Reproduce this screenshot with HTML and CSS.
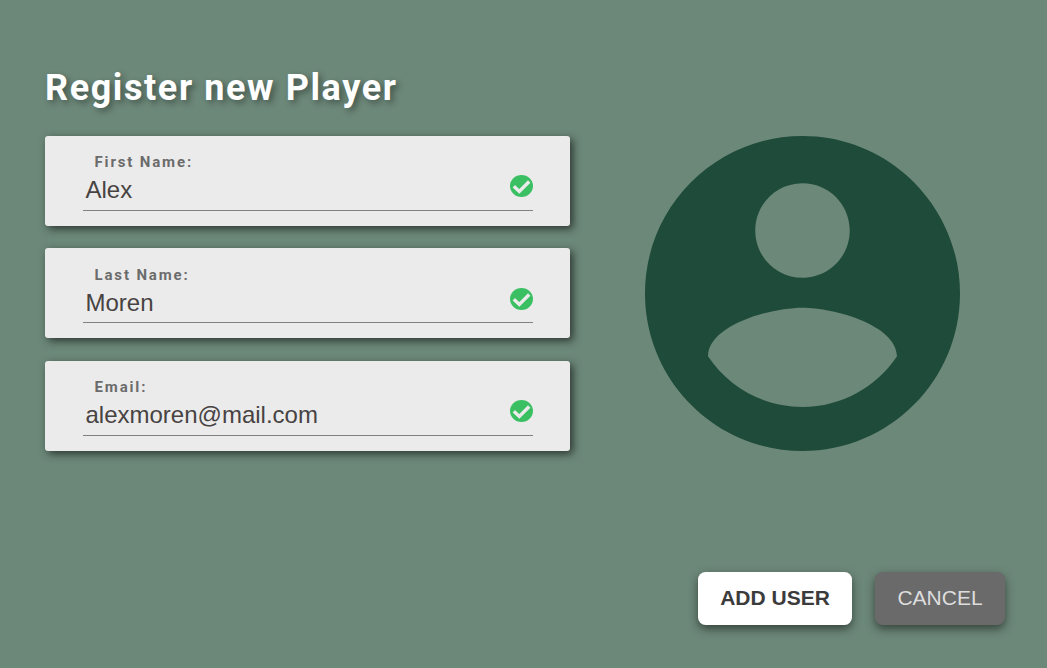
FILE: index.html
```html
<!DOCTYPE html>
<html lang="en">
<head>
<meta charset="utf-8">
<title>Register new Player</title>
<link rel="stylesheet" href="styles.css">
</head>
<body>
<main class="page">
<h1 class="title">Register new Player</h1>
<div class="content">
<form class="form">
<div class="card"><label class="label">First Name:</label><div class="row"><span class="value">Alex</span><svg class="check" viewBox="0 0 23 22"><ellipse cx="11.500" cy="11" rx="11.500" ry="11"/><path d="M3.800 11.300L9.300 16.400L19.200 6.500"/></svg></div></div>
<div class="card middle"><label class="label">Last Name:</label><div class="row"><span class="value">Moren</span><svg class="check" viewBox="0 0 23 22"><ellipse cx="11.500" cy="11" rx="11.500" ry="11"/><path d="M3.800 11.300L9.300 16.400L19.200 6.500"/></svg></div></div>
<div class="card"><label class="label">Email:</label><div class="row"><span class="value">alexmoren@mail.com</span><svg class="check" viewBox="0 0 23 22"><ellipse cx="11.500" cy="11" rx="11.500" ry="11"/><path d="M3.800 11.300L9.300 16.400L19.200 6.500"/></svg></div></div>
</form>
<svg class="avatar" viewBox="2 2 20 20"><path d="M12 2C6.480 2 2 6.480 2 12s4.480 10 10 10 10-4.480 10-10S17.520 2 12 2zm0 3c1.660 0 3 1.340 3 3s-1.340 3-3 3-3-1.340-3-3 1.340-3 3-3zm0 14.200c-2.500 0-4.710-1.280-6-3.220.030-1.990 4-3.080 6-3.080 1.990 0 5.970 1.090 6 3.080-1.290 1.940-3.500 3.220-6 3.220z"/></svg>
</div>
<div class="actions"><button class="btn add">ADD USER</button><button class="btn cancel">CANCEL</button></div>
</main>
</body>
</html>
```

FILE: styles.css
```css
* { box-sizing: border-box; }
body { margin: 0; background: #6c8879; font-family: "Liberation Sans", Arial, sans-serif; }
.page { height: 668px; padding: 64px 42px 43px 45px; display: flex; flex-direction: column; }
.title { margin: 0 0 24px; height: 48px; font: 700 36px/48px Roboto, sans-serif; letter-spacing: 1.6px; color: #fff; text-shadow: 3px 3px 6px rgba(0,0,0,.4); }
.content { display: flex; gap: 75px; }
.form { width: 525px; height: 315px; display: flex; flex-direction: column; gap: 22px; }
.card { flex: none; height: 90px; padding: 15px 37px 0 38px; background: #ebebeb; border-radius: 3px; box-shadow: 3px 3px 8px rgba(0,0,0,.6); }
.card.middle { padding-top: 16px; margin-bottom: 1px; }
.label { display: block; padding-left: 11.500px; font: 700 15px/22px Roboto, sans-serif; letter-spacing: 1.85px; color: #6b6b6b; }
.row { height: 38px; display: flex; justify-content: space-between; border-bottom: 1px solid #808080; }
.middle .row { height: 37px; }
.value { padding-left: 2.500px; font-size: 24px; line-height: 33px; color: #484343; }
.check { width: 23px; height: 22px; margin-top: 2px; fill: #3abf62; }
.check path { fill: none; stroke: #ebebeb; stroke-width: 3.4; }
.avatar { width: 315px; height: 315px; fill: #1f4b3a; }
.actions { margin-top: auto; display: flex; justify-content: flex-end; gap: 23px; }
.btn { height: 53px; padding: 0 0 2px; border: 0; border-radius: 7.500px; font: 400 21px/51px "Liberation Sans", Arial, sans-serif; box-shadow: 0 4px 10px rgba(0,0,0,.5); }
.add { width: 154px; background: #fff; color: #3b3b3b; font-weight: 700; }
.cancel { width: 130px; background: #6a6a6a; color: #ddd; }
```
